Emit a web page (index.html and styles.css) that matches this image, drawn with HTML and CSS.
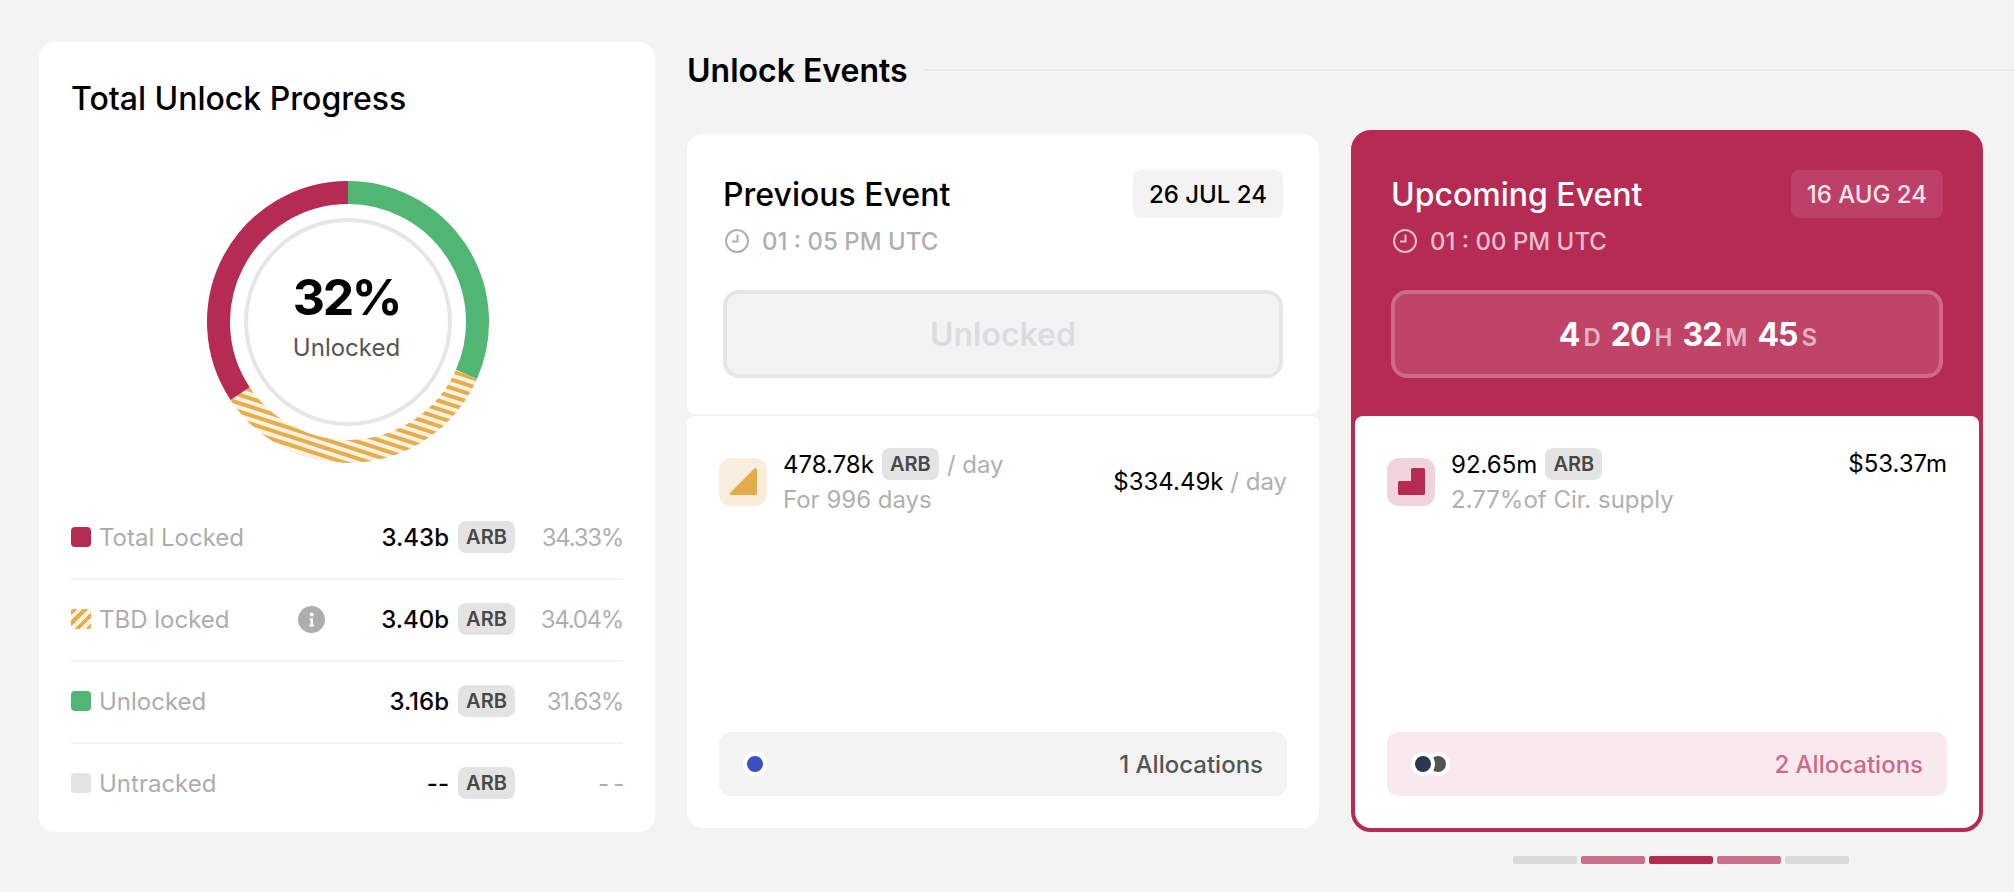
FILE: index.html
```html
<!DOCTYPE html>
<html lang="en">
<head>
<meta charset="utf-8">
<title>Unlock Progress</title>
<link rel="stylesheet" href="styles.css">
</head>
<body>
<main class="page">
  <section class="progress-card">
    <h2 class="progress-title">Total Unlock Progress</h2>
    <div class="donut">
      <svg class="donut-svg" width="284" height="284" viewBox="0 0 284 284">
        <defs>
          <pattern id="hatch" width="20" height="8" patternUnits="userSpaceOnUse" patternTransform="rotate(18)">
            <rect width="20" height="8" fill="#faf1e0"/>
            <rect width="20" height="4" fill="#e5ad4b"/>
          </pattern>
        </defs>
        <circle cx="142" cy="142" r="102" fill="none" stroke="#e6e6e6" stroke-width="4"/>
        <path d="M142 12.5A129.5 129.5 0 0 1 260.43 194.41" fill="none" stroke="#51b574" stroke-width="23"/>
        <path d="M260.43 194.41A129.5 129.5 0 0 1 34.11 213.63" fill="none" stroke="url(#hatch)" stroke-width="23"/>
        <path d="M34.11 213.63A129.5 129.5 0 0 1 142 12.5" fill="none" stroke="#b52b54" stroke-width="23"/>
      </svg>
      <div class="donut-center">
        <div class="donut-value">32%</div>
        <div class="donut-label">Unlocked</div>
      </div>
    </div>
    <div class="legend">
      <div class="legend-row">
        <div class="legend-name"><span class="swatch swatch-red"></span>Total Locked</div>
        <span class="legend-info"></span>
        <div class="legend-value">3.43b</div>
        <span class="chip">ARB</span>
        <div class="legend-pct">34.33%</div>
      </div>
      <div class="legend-row">
        <div class="legend-name"><span class="swatch swatch-hatch"></span>TBD locked</div>
        <span class="legend-info">
          <svg width="27" height="27" viewBox="0 0 27 27"><circle cx="13.5" cy="13.5" r="13.5" fill="#adadad"/><circle cx="13.7" cy="8.4" r="2" fill="#fff"/><path d="M11.6 12.2h3.4v6.6h1.2v1.6h-4.9v-1.6h1.2v-5h-.9z" fill="#fff"/></svg>
        </span>
        <div class="legend-value">3.40b</div>
        <span class="chip">ARB</span>
        <div class="legend-pct">34.04%</div>
      </div>
      <div class="legend-row">
        <div class="legend-name"><span class="swatch swatch-green"></span>Unlocked</div>
        <span class="legend-info"></span>
        <div class="legend-value">3.16b</div>
        <span class="chip">ARB</span>
        <div class="legend-pct">31.63%</div>
      </div>
      <div class="legend-row">
        <div class="legend-name"><span class="swatch swatch-grey"></span>Untracked</div>
        <span class="legend-info"></span>
        <div class="legend-value">--</div>
        <span class="chip">ARB</span>
        <div class="legend-pct">- -</div>
      </div>
    </div>
  </section>

  <section class="events">
    <header class="events-head">
      <h2 class="events-title">Unlock Events</h2>
      <div class="events-rule"></div>
    </header>
    <div class="events-row">
      <article class="event event-prev">
        <div class="event-top">
          <div class="event-head">
            <h3 class="event-title">Previous Event</h3>
            <span class="event-date">26 JUL 24</span>
          </div>
          <div class="event-time">
            <svg class="clock" width="24" height="24" viewBox="0 0 24 24"><circle cx="12" cy="12" r="11" fill="none" stroke="currentColor" stroke-width="2"/><path d="M12.5 5.5v7H7" fill="none" stroke="currentColor" stroke-width="2"/></svg>
            <span>01 : 05 PM UTC</span>
          </div>
          <div class="event-status">Unlocked</div>
        </div>
        <div class="event-body">
          <div class="event-info">
            <div class="tile tile-amber">
              <svg width="48" height="48" viewBox="0 0 48 48"><path d="M36.5 11.5v24h-24z" fill="#e3ab4a" stroke="#e3ab4a" stroke-width="3" stroke-linejoin="round"/></svg>
            </div>
            <div class="info-text">
              <div class="info-line"><span>478.78k</span><span class="chip">ARB</span><span class="muted">/ day</span></div>
              <div class="info-sub">For 996 days</div>
            </div>
            <div class="info-usd info-usd-center">$334.49k <span class="muted">/ day</span></div>
          </div>
          <div class="alloc">
            <div class="dots"><span class="dot dot-blue"></span></div>
            <span>1 Allocations</span>
          </div>
        </div>
      </article>

      <article class="event event-next">
        <div class="event-top">
          <div class="event-head">
            <h3 class="event-title">Upcoming Event</h3>
            <span class="event-date">16 AUG 24</span>
          </div>
          <div class="event-time">
            <svg class="clock" width="24" height="24" viewBox="0 0 24 24"><circle cx="12" cy="12" r="11" fill="none" stroke="currentColor" stroke-width="2"/><path d="M12.5 5.5v7H7" fill="none" stroke="currentColor" stroke-width="2"/></svg>
            <span>01 : 00 PM UTC</span>
          </div>
          <div class="event-status">
            <span class="cd">4<small>D</small></span>
            <span class="cd">20<small>H</small></span>
            <span class="cd">32<small>M</small></span>
            <span class="cd">45<small>S</small></span>
          </div>
        </div>
        <div class="event-body">
          <div class="event-info">
            <div class="tile tile-rose">
              <svg width="48" height="48" viewBox="0 0 48 48"><path d="M25.5 11.5h11v24h-24v-11h13z" fill="#b52b54" stroke="#b52b54" stroke-width="3" stroke-linejoin="round"/></svg>
            </div>
            <div class="info-text">
              <div class="info-line"><span>92.65m</span><span class="chip">ARB</span></div>
              <div class="info-sub">2.77%of Cir. supply</div>
            </div>
            <div class="info-usd">$53.37m</div>
          </div>
          <div class="alloc alloc-rose">
            <div class="dots"><span class="dot dot-navy"></span><span class="dot dot-olive"></span></div>
            <span>2 Allocations</span>
          </div>
        </div>
      </article>
    </div>
    <div class="pager">
      <span class="pager-bar"></span>
      <span class="pager-bar pager-near"></span>
      <span class="pager-bar pager-on"></span>
      <span class="pager-bar pager-near"></span>
      <span class="pager-bar"></span>
    </div>
  </section>
</main>
</body>
</html>
```

FILE: styles.css
```css
* { box-sizing: border-box; }
html, body { margin: 0; height: 100%; }
body {
  background: #f3f3f3;
  color: #000;
  font-family: Inter, "Liberation Sans", sans-serif;
  overflow: hidden;
}
h2, h3 { margin: 0; }

.page {
  display: flex;
  gap: 32px;
  padding: 42px 0 0 39px;
}

/* Left card */
.progress-card {
  width: 616px;
  height: 790px;
  flex: none;
  background: #fff;
  border-radius: 16px;
  padding: 39px 32px 0;
}
.progress-title {
  font-size: 32px;
  line-height: 36px;
  font-weight: 500;
}
.donut {
  position: relative;
  width: 284px;
  height: 284px;
  margin: 63px 0 34px 135px;
}
.donut-svg { display: block; }
.donut-center {
  position: absolute;
  inset: 0;
  padding: 0 3px 11px 0;
  display: flex;
  flex-direction: column;
  align-items: center;
  justify-content: center;
  gap: 7px;
}
.donut-value {
  font-size: 50px;
  line-height: 56px;
  font-weight: 700;
  letter-spacing: -2.3px;
}
.donut-label {
  font-size: 24px;
  line-height: 32px;
  color: #555;
}
.legend-row {
  display: grid;
  grid-template-columns: 227px 27px 1fr 57px 108px;
  align-items: center;
  height: 82px;
  padding-bottom: 2px;
  border-bottom: 2px solid #f3f3f3;
  font-size: 24px;
}
.legend-row:last-child { border-bottom-color: transparent; }
.legend-name {
  display: flex;
  align-items: center;
  gap: 8px;
  color: #adadad;
}
.swatch {
  width: 20px;
  height: 20px;
  border-radius: 4px;
  flex: none;
}
.swatch-red { background: #b52b54; }
.swatch-green { background: #51b574; }
.swatch-grey { background: #e3e3e3; }
.swatch-hatch {
  border-radius: 2px;
  background: repeating-linear-gradient(-45deg, #e5ad4b 0 4px, #faf1e0 4px 8px);
}
.legend-info { display: flex; height: 27px; }
.legend-value {
  text-align: right;
  font-weight: 500;
  margin-right: 9px;
}
.legend-pct {
  text-align: right;
  color: #b0b0b0;
  letter-spacing: -1.3px;
}
.chip {
  display: inline-flex;
  align-items: center;
  justify-content: center;
  width: 57px;
  height: 32px;
  border-radius: 8px;
  background: #e3e3e3;
  color: #484848;
  font-size: 20px;
  font-weight: 600;
}

/* Right side */
.events {
  flex: 1;
  min-width: 0;
}
.events-head {
  display: flex;
  align-items: center;
  gap: 17px;
  height: 56px;
}
.events-title {
  font-size: 32px;
  font-weight: 600;
  line-height: 56px;
  padding-top: 1px;
  white-space: nowrap;
}
.events-rule {
  flex: 1;
  height: 2px;
  background: #e9e9e9;
}
.events-row {
  display: flex;
  gap: 32px;
  margin-top: 32px;
}
.event {
  width: 632px;
  height: 702px;
  display: flex;
  flex-direction: column;
  border: 4px solid transparent;
  border-radius: 20px;
}
.event-prev {
  border: 0;
  height: 694px;
  margin-top: 4px;
  gap: 2px;
}
.event-next {
  background: #b52b54;
  border-color: #b52b54;
}
.event-top {
  padding: 36px 36px 38px;
}
.event-prev .event-top {
  background: #fff;
  border-radius: 16px 16px 8px 8px;
  padding-bottom: 36px;
}
.event-head {
  display: flex;
  justify-content: space-between;
  align-items: center;
  height: 48px;
}
.event-title {
  font-size: 32px;
  font-weight: 500;
}
.event-date {
  height: 48px;
  padding: 0 16px;
  display: flex;
  align-items: center;
  border-radius: 8px;
  background: #f3f3f3;
  font-size: 24px;
  font-weight: 500;
}
.event-time {
  display: flex;
  align-items: center;
  gap: 13px;
  height: 24px;
  margin-top: 11px;
  color: #b0b0b0;
  font-size: 24px;
  font-weight: 500;
}
.clock {
  flex: none;
  margin-left: 2px;
}
.event-status {
  height: 88px;
  margin-top: 37px;
  display: flex;
  align-items: center;
  justify-content: center;
  border: 4px solid #e6e6e6;
  border-radius: 16px;
  background: #f3f3f3;
  color: #dcdce0;
  font-size: 32px;
  font-weight: 600;
}
.event-next .event-title { color: #fff; }
.event-next .event-date {
  background: #bd4068;
  color: #f6e4e9;
}
.event-next .event-time { color: #e7bdca; }
.event-next .event-status {
  background: #bf4468;
  border-color: #cc6a88;
  color: #fff;
  gap: 10px;
  padding-left: 42px;
}
.cd {
  font-size: 32px;
  font-weight: 700;
  letter-spacing: -1px;
}
.cd small {
  margin-left: 4px;
  font-size: 24px;
  font-weight: 600;
  letter-spacing: 0;
  color: #e3b3c2;
}
.event-body {
  flex: 1;
  display: flex;
  flex-direction: column;
  justify-content: space-between;
  padding: 32px;
  background: #fff;
  border-radius: 8px 8px 16px 16px;
}
.event-info {
  display: flex;
  align-items: center;
  gap: 16px;
  font-size: 24px;
}
.tile {
  width: 48px;
  height: 48px;
  flex: none;
  border-radius: 12px;
}
.tile svg { display: block; }
.tile-amber { background: #f9eedc; }
.tile-rose { background: #f0d4dc; }
.info-text {
  display: flex;
  flex-direction: column;
  gap: 4px;
}
.info-line {
  display: flex;
  align-items: center;
  gap: 8px;
  height: 32px;
}
.info-sub {
  line-height: 32px;
  color: #b0b0b0;
}
.muted { color: #b0b0b0; }
.info-usd {
  margin-left: auto;
  align-self: flex-start;
  line-height: 32px;
}
.info-usd-center { align-self: center; }
.alloc {
  display: flex;
  justify-content: space-between;
  align-items: center;
  height: 64px;
  padding: 0 24px;
  border-radius: 12px;
  background: #f3f3f3;
  color: #555;
  font-size: 24px;
  font-weight: 500;
}
.alloc-rose {
  background: #f7e9ed;
  color: #cb6a8a;
}
.dots { display: flex; }
.dot {
  width: 24px;
  height: 24px;
  border-radius: 50%;
  border: 4px solid #fff;
  position: relative;
}
.dot + .dot { margin-left: -9px; }
.dot-blue { background: #3d4fc4; }
.dot-navy { background: #2f3650; z-index: 1; }
.dot-olive { background: #545450; }
.pager {
  display: flex;
  gap: 4px;
  margin: 24px 0 0 826px;
}
.pager-bar {
  width: 64px;
  height: 8px;
  border-radius: 2px;
  background: #d9d9d9;
}
.pager-near { background: #cb6f8c; }
.pager-on { background: #b52b54; }
```
